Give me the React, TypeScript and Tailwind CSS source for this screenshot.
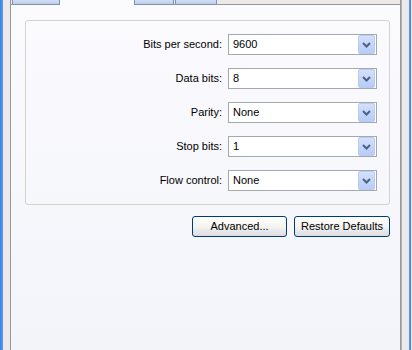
import React from 'react';

const FONT = "font-['Liberation_Sans',Arial,sans-serif]";

const ROWS = [
  { label: 'Bits per second:', value: '9600' },
  { label: 'Data bits:', value: '8' },
  { label: 'Parity:', value: 'None' },
  { label: 'Stop bits:', value: '1' },
  { label: 'Flow control:', value: 'None' },
];

const Combo: React.FC<{ value: string }> = ({ value }) => (
  <div className="w-[149px] h-[21px] border border-[#a3a9b0] bg-white flex items-center justify-between pl-[4px] pr-px">
    <span className="text-[11px] text-black leading-none">{value}</span>
    <div className="w-[17px] h-[19px] rounded-[2px] border border-[#b9cbef] bg-gradient-to-b from-[#d3e0fd] to-[#b7ccf8] flex items-center justify-center">
      <svg width="9" height="6" viewBox="0 0 9 6">
        <polyline points="1,1 4.5,4.5 8,1" fill="none" stroke="#4d6185" strokeWidth="2" />
      </svg>
    </div>
  </div>
);

const XpButton: React.FC<{ label: string; width: string }> = ({ label, width }) => (
  <button
    className={`${width} h-[21px] rounded-[3px] border border-[#003c74] bg-gradient-to-b from-white via-[#f4f4f0] to-[#dcdce4] text-[11px] text-black leading-none flex items-center justify-center`}
  >
    {label}
  </button>
);

export default function App() {
  return (
    <div className={`w-[412px] h-[350px] flex overflow-hidden bg-[#ece9e8] ${FONT}`}>
      {/* window frame, left */}
      <div className="w-[3px] bg-gradient-to-r from-[#3b7fe6] to-[#5a9df3]" />
      <div className="w-[7px]" />

      {/* tab control */}
      <div className="w-[391px] flex flex-col border-x border-[#919b9c]">
        {/* tab strip */}
        <div className="h-[5px] flex">
          <div className="w-px border-b border-[#919b9c]" />
          <div className="w-[48px] border-x border-b border-[#7f93b8] bg-gradient-to-b from-[#d2def2] to-[#bccdeb]" />
          <div className="w-[74px] bg-[#fbfbfe]" />
          <div className="w-[40px] border-x border-b border-[#7f93b8] bg-gradient-to-b from-[#d2def2] to-[#bccdeb]" />
          <div className="w-px border-b border-[#919b9c]" />
          <div className="w-[42px] border-x border-b border-[#7f93b8] bg-gradient-to-b from-[#d2def2] to-[#bccdeb]" />
          <div className="flex-1 border-b border-[#919b9c]" />
        </div>

        {/* tab page */}
        <div className="flex-1 bg-gradient-to-b from-[#fbfbfe] to-[#f3f4fa] pl-[14px] pt-[15px]">
          <div className="w-[365px] rounded-[3px] border border-[#d3d3cc] py-[13px] pr-[12px] flex flex-col gap-[13px]">
            {ROWS.map((r) => (
              <div key={r.label} className="flex items-center justify-end gap-[6px]">
                <span className="text-[11px] text-black leading-none">{r.label}</span>
                <Combo value={r.value} />
              </div>
            ))}
          </div>

          <div className="w-[365px] mt-[11px] flex justify-end gap-[7px]">
            <XpButton label="Advanced..." width="w-[95px]" />
            <XpButton label="Restore Defaults" width="w-[96px]" />
          </div>
        </div>
      </div>

      {/* window frame, right */}
      <div className="w-px bg-[#aeb3bd]" />
      <div className="w-[7px]" />
      <div className="w-[2px] bg-gradient-to-r from-[#5a9df3] to-[#3b7fe6]" />
    </div>
  );
}
